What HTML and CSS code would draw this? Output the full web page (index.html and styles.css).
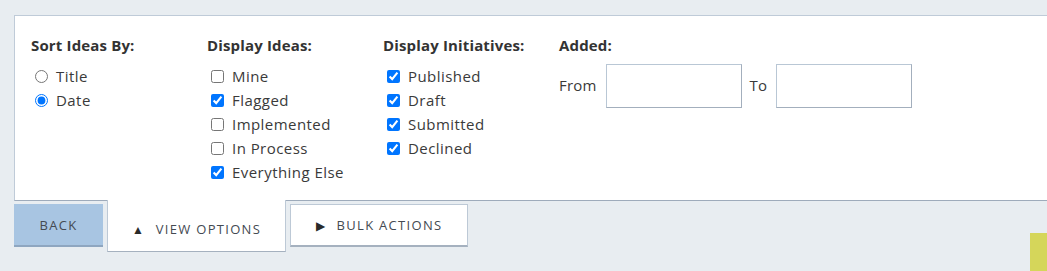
FILE: index.html
```html
<!DOCTYPE html>
<html lang="en">
<head>
    <meta charset="UTF-8">
    <title>View Options</title>
    <link rel="stylesheet" href="styles.css">
</head>
<body>
    <div class="options-panel">
        <div class="option-col">
            <h3>Sort Ideas By:</h3>
            <label class="option"><input type="radio" name="sort"> Title</label>
            <label class="option"><input type="radio" name="sort" checked> Date</label>
        </div>
        <div class="option-col">
            <h3>Display Ideas:</h3>
            <label class="option"><input type="checkbox"> Mine</label>
            <label class="option"><input type="checkbox" checked> Flagged</label>
            <label class="option"><input type="checkbox"> Implemented</label>
            <label class="option"><input type="checkbox"> In Process</label>
            <label class="option"><input type="checkbox" checked> Everything Else</label>
        </div>
        <div class="option-col">
            <h3>Display Initiatives:</h3>
            <label class="option"><input type="checkbox" checked> Published</label>
            <label class="option"><input type="checkbox" checked> Draft</label>
            <label class="option"><input type="checkbox" checked> Submitted</label>
            <label class="option"><input type="checkbox" checked> Declined</label>
        </div>
        <div class="option-col added">
            <h3>Added:</h3>
            <div class="date-range">
                <span>From</span>
                <input type="text" class="date-input">
                <span>To</span>
                <input type="text" class="date-input">
            </div>
        </div>
    </div>

    <div class="tab-bar">
        <button class="tab back">BACK</button>
        <button class="tab active"><span class="arrow">&#9650;</span> VIEW OPTIONS</button>
        <button class="tab"><span class="arrow">&#9654;</span> BULK ACTIONS</button>
    </div>

    <div class="feedback-tab"></div>
</body>
</html>
```

FILE: styles.css
```css
body {
    margin: 0;
    background: #e8edf1;
    font-family: 'Open Sans', 'Liberation Sans', sans-serif;
    color: #3a3a3a;
    overflow: hidden;
}

.options-panel {
    display: flex;
    margin: 15px 0 0 14px;
    height: 145px;
    padding: 19px 0 20px 16px;
    background: #fff;
    border: 1px solid #bfcbd8;
    border-right: none;
    border-bottom-color: #9eabbb;
}

.option-col {
    width: 176px;
    flex-shrink: 0;
}

.option-col h3 {
    margin: 0 0 9px;
    font-size: 15px;
    line-height: 20px;
    font-weight: 700;
    letter-spacing: 0.15px;
    color: #333;
}

.option {
    display: flex;
    align-items: center;
    height: 24px;
    font-size: 15px;
    letter-spacing: 0.45px;
    white-space: nowrap;
}

.option input {
    width: 13px;
    height: 13px;
    margin: 0 8px 0 4px;
}

.date-range {
    display: flex;
    align-items: center;
    font-size: 15px;
    line-height: 20px;
    letter-spacing: 0.2px;
}

.date-range span {
    margin-top: -3px;
}

.date-input {
    width: 136px;
    height: 44px;
    box-sizing: border-box;
    margin: 0 8px 0 9px;
    border: 1px solid #b9c7d5;
    border-bottom-color: #a3afbd;
    border-right-color: #a3afbd;
}

.tab-bar {
    display: flex;
    align-items: flex-start;
    gap: 4px;
    margin-left: 14px;
}

.tab {
    height: 43px;
    margin-top: 3px;
    padding: 0;
    width: 178px;
    background: #fff;
    border: 1px solid #bdc9d6;
    border-bottom: 2px solid #a5b1bf;
    font-family: inherit;
    font-size: 13px;
    letter-spacing: 1.3px;
    color: #444a52;
}

.tab .arrow {
    font-size: 12px;
    margin-right: 6px;
    color: #2a2a2a;
}

.tab.back {
    width: 89px;
    background: #a8c5e2;
    border: none;
    border-bottom: 2px solid #8ea6c0;
}

.tab.active {
    position: relative;
    z-index: 1;
    width: 179px;
    height: 52px;
    margin-top: -1px;
    padding-top: 6px;
    border-top: none;
    border-bottom: 1px solid #a5b1bf;
}

.feedback-tab {
    position: fixed;
    right: 0;
    bottom: 0;
    width: 17px;
    height: 38px;
    background: #d5d65a;
}
```
